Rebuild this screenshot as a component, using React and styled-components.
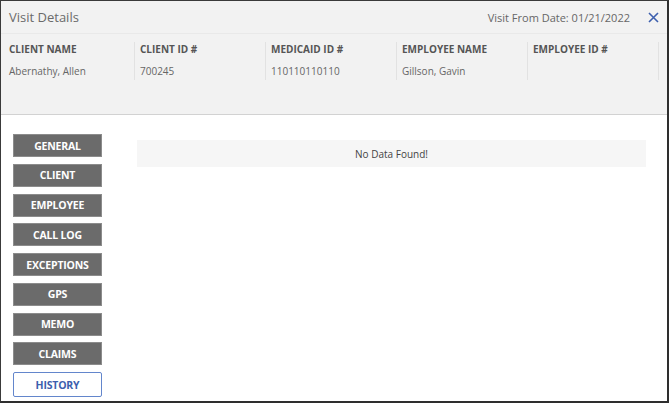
import React from "react";
import styled, { createGlobalStyle } from "styled-components";

const Global = createGlobalStyle`
  html, body { margin: 0; padding: 0; background: #fff; }
  body { font-family: "Open Sans", "Noto Sans", sans-serif; }
  * { box-sizing: border-box; }
`;

const Window = styled.div`
  width: 669px;
  height: 403px;
  border-top: 1px solid #3a3a3a;
  border-left: 1px solid #3a3a3a;
  border-right: 2px solid #2e2e2e;
  border-bottom: 2px solid #2e2e2e;
  display: flex;
  flex-direction: column;
  background: #fff;
  overflow: hidden;
`;

const Head = styled.div`
  background: #f2f2f2;
  border-bottom: 1px solid #d2d2d2;
  height: 114px;
  display: flex;
  flex-direction: column;
`;

const TitleBar = styled.div`
  height: 33px;
  display: flex;
  align-items: center;
  padding: 0 8px 0 8px;
  border-bottom: 1px solid #e9e9e9;
`;

const Title = styled.div`
  flex: 1;
  font-size: 13px;
  color: #6a6a6a;
`;

const DateText = styled.div`
  font-size: 11px;
  color: #666;
  margin-right: 18px;
`;

const Close = styled.button`
  border: 0;
  background: none;
  padding: 0;
  display: flex;
  align-items: center;
  cursor: pointer;
`;

const InfoRow = styled.div`
  display: flex;
  padding: 6px 0 0 3px;
`;

const InfoCol = styled.div`
  width: 131px;
  height: 38px;
  border-right: 1px solid #e2e2e2;
  padding: 0 0 0 5px;
  display: flex;
  flex-direction: column;
  gap: 8px;
  margin-top: 2px;
`;

const Label = styled.div`
  font-size: 10px;
  font-weight: 700;
  color: #555;
  line-height: 14px;
`;

const Value = styled.div`
  font-size: 10px;
  color: #666;
  line-height: 14px;
`;

const Body = styled.div`
  flex: 1;
  display: flex;
  padding: 19px 21px 0 12px;
  gap: 35px;
`;

const Nav = styled.div`
  display: flex;
  flex-direction: column;
  gap: 6.75px;
  width: 89px;
`;

const NavButton = styled.button`
  height: ${(p) => (p.$active ? 25 : 23)}px;
  width: 89px;
  font-family: "Open Sans", "Noto Sans", sans-serif;
  font-size: 10.5px;
  font-weight: 700;
  text-transform: uppercase;
  letter-spacing: -0.2px;
  padding: 0;
  cursor: pointer;
  background: ${(p) => (p.$active ? "#fff" : "#6b6b6b")};
  color: ${(p) => (p.$active ? "#3d5fae" : "#fff")};
  border: ${(p) => (p.$active ? "1.5px solid #6386cc" : "1px solid #8c8c8c")};
  border-radius: ${(p) => (p.$active ? "2px" : "0")};
`;

const Content = styled.div`
  flex: 1;
  padding-top: 6px;
`;

const Empty = styled.div`
  height: 27px;
  background: #f6f6f6;
  display: flex;
  align-items: center;
  justify-content: center;
  font-size: 10px;
  color: #444;
`;

const info = [
  ["CLIENT NAME", "Abernathy, Allen"],
  ["CLIENT ID #", "700245"],
  ["MEDICAID ID #", "110110110110"],
  ["EMPLOYEE NAME", "Gillson, Gavin"],
  ["EMPLOYEE ID #", ""],
];

const tabs = ["General", "Client", "Employee", "Call Log", "Exceptions", "GPS", "Memo", "Claims", "History"];

export default function App() {
  return (
    <>
      <Global />
      <Window>
        <Head>
          <TitleBar>
            <Title>Visit Details</Title>
            <DateText>Visit From Date: 01/21/2022</DateText>
            <Close aria-label="close">
              <svg width="11" height="11" viewBox="0 0 11 11">
                <path d="M1 1L10 10M10 1L1 10" stroke="#3d5fae" strokeWidth="1.6" />
              </svg>
            </Close>
          </TitleBar>
          <InfoRow>
            {info.map(([l, v]) => (
              <InfoCol key={l}>
                <Label>{l}</Label>
                <Value>{v || "\u00a0"}</Value>
              </InfoCol>
            ))}
          </InfoRow>
        </Head>
        <Body>
          <Nav>
            {tabs.map((t) => (
              <NavButton key={t} $active={t === "History"}>{t}</NavButton>
            ))}
          </Nav>
          <Content>
            <Empty>No Data Found!</Empty>
          </Content>
        </Body>
      </Window>
    </>
  );
}
